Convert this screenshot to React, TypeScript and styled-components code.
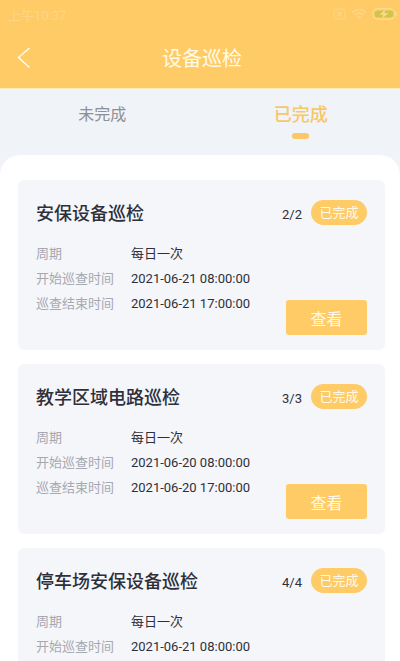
import React, { useState } from "react";
import styled, { createGlobalStyle } from "styled-components";

const GlobalStyle = createGlobalStyle`
  *, *::before, *::after { box-sizing: border-box; }
  body {
    margin: 0;
    background: #ffffff;
    color: #2d303b;
    font-family: Roboto, "Noto Sans CJK SC", sans-serif;
    font-size: 13px;
    overflow: hidden;
  }
  #root { height: 100vh; }
  button { font-family: inherit; border: 0; padding: 0; cursor: pointer; }
  h1, h2, dl, dd { margin: 0; }
`;

const Screen = styled.div`
  display: flex;
  flex-direction: column;
  height: 100%;
  background: #f0f3f8;
`;

const Header = styled.header`
  flex: none;
  background: #ffcb66;
  border-bottom: 1px solid #fdebc0;
`;

const StatusBar = styled.div`
  display: flex;
  align-items: center;
  justify-content: space-between;
  height: 28px;
  padding: 0 3px 0 8px;
  color: #ffd687;
  font-size: 13px;
`;

const StatusIcons = styled.div`
  display: flex;
  align-items: center;
  gap: 5px;
`;

const NavBar = styled.div`
  display: grid;
  grid-template-columns: 50px 1fr 46px;
  align-items: center;
  height: 60px;
`;

const BackButton = styled.button`
  display: flex;
  align-items: center;
  height: 48px;
  padding-left: 16px;
  background: none;
  color: #fffbe8;
`;

const PageTitle = styled.h1`
  padding-top: 2px;
  color: #fffbe8;
  font-size: 20px;
  font-weight: 400;
  line-height: 28px;
  text-align: center;
`;

const Tabs = styled.div`
  display: grid;
  grid-template-columns: 1fr 1fr;
  flex: none;
  height: 66px;
  padding-left: 3px;
`;

const Tab = styled.button<{ $active: boolean }>`
  display: flex;
  flex-direction: column;
  align-items: center;
  gap: 4px;
  padding-top: 12px;
  background: none;
  color: ${(p) => (p.$active ? "#f8c766" : "#8c9097")};
  font-size: ${(p) => (p.$active ? 18 : 16)}px;
  font-weight: ${(p) => (p.$active ? 500 : 400)};
  line-height: 28px;

  &::after {
    content: "";
    width: 17px;
    height: 6px;
    border-radius: 3px;
    background: ${(p) => (p.$active ? "#fcc766" : "transparent")};
  }
`;

const Panel = styled.main`
  display: flex;
  flex-direction: column;
  gap: 14px;
  flex: 1;
  min-height: 0;
  overflow-y: auto;
  scrollbar-width: none;
  padding: 25px 15px 14px 18px;
  border-radius: 20px 20px 0 0;
  background: #ffffff;
`;

const Card = styled.article`
  flex: none;
  padding: 20px 18px 15px;
  border-radius: 6px;
  background: #f5f6fa;
`;

const CardHeader = styled.div`
  display: flex;
  align-items: center;
  height: 25px;
  margin-bottom: 16px;
`;

const CardTitle = styled.h2`
  flex: 1;
  padding-top: 3px;
  font-size: 18px;
  font-weight: 500;
  line-height: 26px;
`;

const Count = styled.span`
  padding-top: 4px;
  margin-right: 9px;
  font-size: 13px;
`;

const Badge = styled.span`
  width: 56px;
  border-radius: 13px;
  background: #ffcb66;
  color: #fffbe8;
  font-size: 13px;
  line-height: 25px;
  text-align: center;
`;

const CardBody = styled.div`
  display: flex;
  justify-content: space-between;
  min-height: 94px;
`;

const Details = styled.dl`
  display: grid;
  grid-template-columns: 95px auto;
  grid-auto-rows: 25px;
  line-height: 25px;
  white-space: nowrap;
`;

const Label = styled.dt`
  color: #a5a8b1;
`;

const ViewButton = styled.button`
  align-self: flex-end;
  width: 81px;
  height: 35px;
  border-radius: 3px;
  background: #ffcb66;
  color: #fffbe8;
  font-size: 16px;
`;

const inspections = [
  { title: "安保设备巡检", count: "2/2", date: "2021-06-21" },
  { title: "教学区域电路巡检", count: "3/3", date: "2021-06-20" },
  { title: "停车场安保设备巡检", count: "4/4", date: "2021-06-21" },
];

const tabs = ["未完成", "已完成"];

function NoSimIcon() {
  return (
    <svg width="13" height="12" viewBox="0 0 13 12" fill="none" stroke="currentColor">
      <rect x="1" y="1" width="11" height="10" rx="2" />
      <path d="M4.2 3.7l4.6 4.6m0-4.6l-4.6 4.6" strokeWidth="1.2" />
    </svg>
  );
}

function WifiIcon() {
  return (
    <svg width="16" height="12" viewBox="0 0 16 12" fill="none" stroke="currentColor" strokeWidth="1.5">
      <path d="M1 4.5Q8-1.5 15 4.5M3.5 7Q8 3.2 12.5 7" />
      <path d="M5.5 8.8Q8 7 10.5 8.8L8 11z" fill="currentColor" stroke="none" />
    </svg>
  );
}

function BatteryIcon() {
  return (
    <svg width="25" height="12" viewBox="0 0 25 12">
      <rect x="1" y="0.5" width="21.5" height="11" rx="4.5" fill="#ffd27a" stroke="#ffd98c" />
      <path d="M24 4v4" stroke="#ffd98c" strokeWidth="1.5" />
      <rect x="2.5" y="2.5" width="19" height="7" rx="3" fill="#cfc548" />
      <path d="M13.5 1.5L7.5 6.8h3.8L10 10.5l6.5-5.3h-4z" fill="#ffd98c" />
    </svg>
  );
}

export default function App() {
  const [active, setActive] = useState(1);

  return (
    <Screen>
      <GlobalStyle />
      <Header>
        <StatusBar>
          <span>上午10:37</span>
          <StatusIcons>
            <NoSimIcon />
            <WifiIcon />
            <BatteryIcon />
          </StatusIcons>
        </StatusBar>
        <NavBar>
          <BackButton aria-label="返回">
            <svg width="16" height="22" viewBox="0 0 16 22" fill="none" stroke="currentColor" strokeWidth="1.6">
              <path d="M13.5 1L2.5 10.5l11 10" />
            </svg>
          </BackButton>
          <PageTitle>设备巡检</PageTitle>
        </NavBar>
      </Header>
      <Tabs role="tablist">
        {tabs.map((name, i) => (
          <Tab key={name} role="tab" aria-selected={active === i} $active={active === i} onClick={() => setActive(i)}>
            {name}
          </Tab>
        ))}
      </Tabs>
      <Panel>
        {inspections.map((item) => (
          <Card key={item.title}>
            <CardHeader>
              <CardTitle>{item.title}</CardTitle>
              <Count>{item.count}</Count>
              <Badge>已完成</Badge>
            </CardHeader>
            <CardBody>
              <Details>
                <Label>周期</Label>
                <dd>每日一次</dd>
                <Label>开始巡查时间</Label>
                <dd>{item.date} 08:00:00</dd>
                <Label>巡查结束时间</Label>
                <dd>{item.date} 17:00:00</dd>
              </Details>
              <ViewButton>查看</ViewButton>
            </CardBody>
          </Card>
        ))}
      </Panel>
    </Screen>
  );
}
